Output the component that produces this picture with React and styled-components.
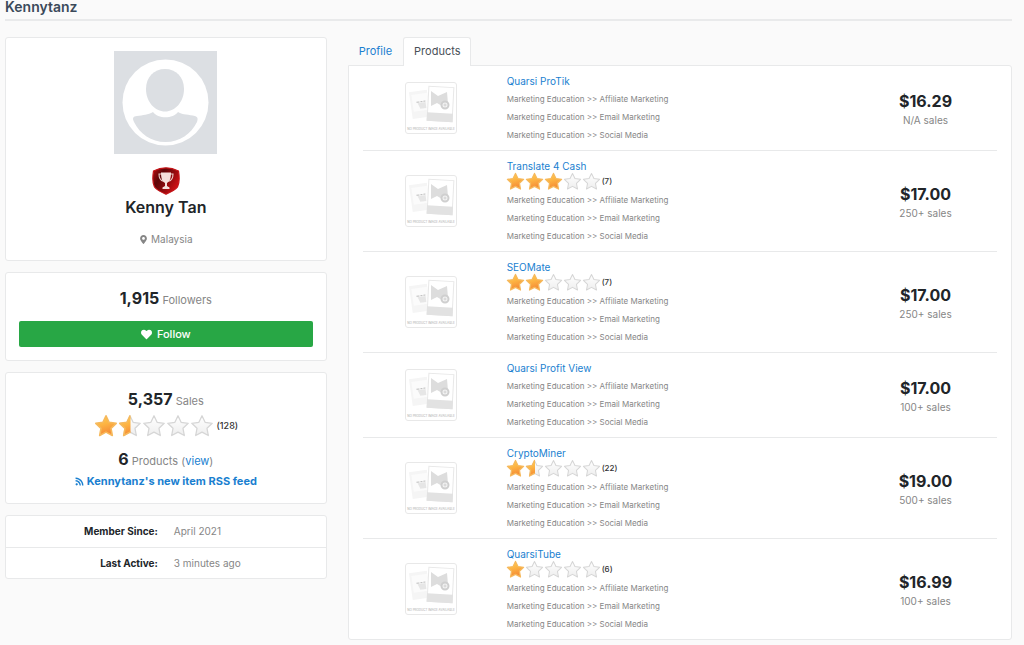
import styled, { createGlobalStyle } from 'styled-components';
import { FaHeart, FaMapMarkerAlt, FaRss } from 'react-icons/fa';

const GlobalStyle = createGlobalStyle`
  * {
    box-sizing: border-box;
  }

  body {
    margin: 0;
    background: #fafafa;
    color: #212529;
    font-family: Inter, 'Liberation Sans', sans-serif;
    font-size: 10px;
    line-height: 16px;
  }
`;

const Page = styled.main`
  padding: 0 12px 6px 5px;
`;

const PageTitle = styled.h1`
  margin: 0 0 16px;
  padding-bottom: 5px;
  border-bottom: 2px solid #e9eaeb;
  color: #3b4a5a;
  font-size: 14px;
  font-weight: 600;
  line-height: 14px;
`;

const Columns = styled.div`
  display: grid;
  grid-template-columns: calc((100% + 21px) / 3 - 21px) 1fr;
  column-gap: 21px;
  align-items: start;
`;

const Sidebar = styled.aside`
  display: flex;
  flex-direction: column;
  gap: 11px;
`;

const Card = styled.section`
  display: flex;
  flex-direction: column;
  align-items: center;
  padding: ${(props) => props.$padding || '0'};
  background: #fff;
  border: 1px solid #e8e9ea;
  border-radius: 3px;
  overflow: hidden;
`;

const UserName = styled.h2`
  margin: 0;
  font-size: 16px;
  font-weight: 600;
  line-height: 24px;
`;

const Location = styled.p`
  display: flex;
  align-items: center;
  gap: 3px;
  margin: 12px 0 0;
  color: #868686;
`;

const Stat = styled.p`
  margin: 0;
  color: #868686;
  font-size: 11px;
  line-height: 24px;

  strong {
    color: #212529;
    font-size: 16px;
    font-weight: 700;
  }
`;

const Link = styled.a`
  color: #1a7fd0;
  font-weight: ${(props) => (props.$bold ? 700 : 400)};
  text-decoration: none;
`;

const FeedLink = styled(Link)`
  display: flex;
  align-items: center;
  gap: 3px;
  font-size: 11px;
`;

const FollowButton = styled.button`
  display: flex;
  align-items: center;
  justify-content: center;
  gap: 5px;
  width: 100%;
  height: 26px;
  margin-top: 9px;
  border: 0;
  border-radius: 2px;
  background: #28a745;
  color: #fff;
  font-family: inherit;
  font-size: 11px;
  font-weight: 500;
`;

const Rating = styled.div`
  display: flex;
  align-items: center;
  height: ${(props) => (props.$large ? 26 : 16)}px;
  margin-bottom: ${(props) => (props.$large ? 8 : 0)}px;
  color: #333;
  font-size: ${(props) => (props.$large ? 9 : 8)}px;
  font-weight: 500;

  svg {
    width: ${(props) => (props.$large ? 24 : 19)}px;
    height: ${(props) => (props.$large ? 24 : 19)}px;
    margin-left: ${(props) => (props.$large ? 0 : -1)}px;
    margin-right: ${(props) => (props.$large ? 0 : 1)}px;
  }

  span {
    margin-left: ${(props) => (props.$large ? 3 : 0)}px;
  }
`;

const DetailsTable = styled.table`
  width: 100%;
  border-collapse: collapse;

  tr + tr {
    border-top: 1px solid #e8e9ea;
  }

  th,
  td {
    height: 31px;
    padding: 0 8px;
  }

  th {
    width: 50%;
    font-weight: 700;
    text-align: right;
  }

  td {
    color: #868686;
  }
`;

const Tabs = styled.nav`
  display: flex;
  margin-bottom: -1px;
`;

const Tab = styled.a`
  position: relative;
  padding: 5px 10px 6px;
  border: 1px solid ${(props) => (props.$active ? '#e8e9ea' : 'transparent')};
  border-bottom: 0;
  border-radius: 3px 3px 0 0;
  background: ${(props) => (props.$active ? '#fff' : 'transparent')};
  color: ${(props) => (props.$active ? '#495057' : '#1a7fd0')};
  font-size: 11px;
  line-height: 17px;
  text-decoration: none;
`;

const Panel = styled.ul`
  margin: 0;
  padding: 0 14px;
  list-style: none;
  background: #fff;
  border: 1px solid #e8e9ea;
  border-radius: 0 3px 3px 3px;
`;

const ProductRow = styled.li`
  display: grid;
  grid-template-columns: 136px 1fr 143px;
  column-gap: 8px;
  align-items: center;
  padding: 8px 0 6px;

  &:not(:last-child) {
    border-bottom: 1px solid #e8e9ea;
  }
`;

const Thumb = styled.div`
  display: flex;
  justify-content: center;
  padding-bottom: 3px;
`;

const ProductName = styled.h3`
  margin: 0;
  font-size: 10px;
  line-height: 14px;
`;

const Categories = styled.div`
  margin-top: 2px;
`;

const Category = styled.p`
  margin: 0;
  color: #868686;
  font-size: 8px;
  line-height: 18px;
`;

const PriceBox = styled.div`
  color: #868686;
  text-align: center;
`;

const Price = styled.div`
  color: #212529;
  font-size: 16px;
  font-weight: 700;
  line-height: 22px;
`;

const STAR =
  'M12 1.8 L15.1 8.3 L22.2 9.3 L17 14.3 L18.3 21.5 L12 18.1 L5.7 21.5 L7 14.3 L1.8 9.3 L8.9 8.3 Z';

function Star({ fill }) {
  return (
    <svg viewBox="0 0 24 24" aria-hidden="true">
      <defs>
        <linearGradient id="starOn" x1="0" y1="0" x2="0.3" y2="1">
          <stop offset="0" stopColor="#ffd04f" />
          <stop offset="0.5" stopColor="#fdb443" />
          <stop offset="1" stopColor="#f58a35" />
        </linearGradient>
        <linearGradient id="starOff" x1="0" y1="0" x2="0" y2="1">
          <stop offset="0" stopColor="#ffffff" />
          <stop offset="1" stopColor="#eeeeee" />
        </linearGradient>
        <clipPath id="starHalf">
          <rect width="12.5" height="24" />
        </clipPath>
      </defs>
      {fill < 1 && (
        <path
          d={STAR}
          fill="url(#starOff)"
          stroke="#d6d6d6"
          strokeWidth="1.3"
          strokeLinejoin="round"
        />
      )}
      {fill > 0 && (
        <path
          d={STAR}
          fill="url(#starOn)"
          stroke="#f6b95c"
          strokeWidth="1.6"
          strokeLinejoin="round"
          clipPath={fill < 1 ? 'url(#starHalf)' : undefined}
        />
      )}
    </svg>
  );
}

function Stars({ value, count, large }) {
  return (
    <Rating $large={large} aria-label={`${value} out of 5`}>
      {[0, 1, 2, 3, 4].map((i) => (
        <Star key={i} fill={Math.max(0, Math.min(1, value - i))} />
      ))}
      <span>({count})</span>
    </Rating>
  );
}

function Avatar() {
  return (
    <svg width="103" height="103" viewBox="0 0 103 103" aria-label="Avatar">
      <rect width="103" height="103" fill="#dcdfe3" />
      <circle cx="51.5" cy="51.5" r="43" fill="#fff" />
      <path
        d="M51 18 C62 18 70 26 70 38 C70 51 61 60.5 51 60.5 C41 60.5 32 51 32 38 C32 26 40 18 51 18 Z"
        fill="#dcdfe3"
      />
      <path
        d="M39 61 C44 68 59 68 64 61 C69 64 75 63.5 81 65 C84 66 84 68 83 71 C77 83 66 91 51.5 91 C37 91 26 83 20 71 C18 67 19 65.5 23 65 C29 64 34 64 39 61 Z"
        fill="#dcdfe3"
      />
    </svg>
  );
}

const Badge = styled.svg`
  margin: 13px 0 0;
`;

function TrophyBadge() {
  return (
    <Badge width="28" height="28" viewBox="0 0 28 28" aria-label="Top seller">
      <defs>
        <linearGradient id="shield" x1="0" y1="0" x2="1" y2="0.6">
          <stop offset="0" stopColor="#b80f12" />
          <stop offset="0.35" stopColor="#5d0608" />
          <stop offset="0.65" stopColor="#8e0a0d" />
          <stop offset="1" stopColor="#d01014" />
        </linearGradient>
      </defs>
      <path
        d="M14 0.8 C18 0.8 23 2.2 26.5 4 C27.5 10 27.5 16 25.5 20 C23 23.5 18 25.5 14 27.2 C10 25.5 5 23.5 2.5 20 C0.5 16 0.5 10 1.5 4 C5 2.2 10 0.8 14 0.8 Z"
        fill="url(#shield)"
        stroke="#c51418"
        strokeWidth="1.2"
      />
      <path
        d="M9.5 7 H7 C7 11 8 13.5 11.5 14.2 M18.5 7 H21 C21 11 20 13.5 16.5 14.2"
        fill="none"
        stroke="#ecd0cb"
        strokeWidth="1.1"
      />
      <path
        d="M9 5.5 H19 C19 11 18 14.5 15 16 V19 L17.5 20.5 V22 H10.5 V20.5 L13 19 V16 C10 14.5 9 11 9 5.5 Z"
        fill="#f4dfdb"
      />
    </Badge>
  );
}

function NoImage() {
  return (
    <svg width="52" height="52" viewBox="0 0 52 52" aria-label="No product image available">
      <rect x="0.5" y="0.5" width="51" height="51" rx="2.5" fill="#fff" stroke="#e8e8e8" />
      <g transform="rotate(-8 14 24)">
        <rect x="6" y="9" width="18" height="27" fill="#f5f5f5" />
        <rect x="8" y="12" width="16" height="17" fill="#fbfbfb" />
        <path d="M13 21 h8 v6 h-6 z" fill="#e6e6e6" />
        <path d="M12 20 h3 M16 20 h2 M19 20 h2" stroke="#bdbdbd" />
      </g>
      <g transform="rotate(3 36 22)">
        <rect x="23" y="5" width="25" height="34" fill="#fff" stroke="#e8e8e8" />
        <rect x="22.5" y="31" width="26" height="8.5" fill="#e2e2e2" />
      </g>
      <path d="M26 9 L33 14 L42 10 L43 22 L37 24 L32 21 L26 24 Z" fill="#dddddd" />
      <circle cx="40" cy="23" r="3.5" fill="#f3f3f3" stroke="#cfcfcf" strokeWidth="2" />
      <path d="M38.5 23 H41.5 M40 21.5 V24.5" stroke="#cccccc" strokeWidth="0.8" />
      <text
        x="26"
        y="48"
        textAnchor="middle"
        fontFamily="Inter, sans-serif"
        fontSize="3"
        fontWeight="500"
        fill="#b8b8b8"
      >
        NO PRODUCT IMAGE AVAILABLE
      </text>
    </svg>
  );
}

const categories = ['Affiliate Marketing', 'Email Marketing', 'Social Media'];

const products = [
  { name: 'Quarsi ProTik', price: '$16.29', sales: 'N/A' },
  { name: 'Translate 4 Cash', price: '$17.00', sales: '250+', rating: 3, count: 7 },
  { name: 'SEOMate', price: '$17.00', sales: '250+', rating: 2, count: 7 },
  { name: 'Quarsi Profit View', price: '$17.00', sales: '100+' },
  { name: 'CryptoMiner', price: '$19.00', sales: '500+', rating: 1.5, count: 22 },
  { name: 'QuarsiTube', price: '$16.99', sales: '100+', rating: 1, count: 6 },
];

function Product({ product }) {
  const { name, price, sales, rating, count } = product;

  return (
    <ProductRow>
      <Thumb>
        <NoImage />
      </Thumb>
      <div>
        <ProductName>
          <Link href="#">{name}</Link>
        </ProductName>
        {rating && <Stars value={rating} count={count} />}
        <Categories>
          {categories.map((category) => (
            <Category key={category}>Marketing Education &gt;&gt; {category}</Category>
          ))}
        </Categories>
      </div>
      <PriceBox>
        <Price>{price}</Price>
        {sales} sales
      </PriceBox>
    </ProductRow>
  );
}

function App() {
  return (
    <>
      <GlobalStyle />
      <Page>
        <PageTitle>Kennytanz</PageTitle>
        <Columns>
          <Sidebar>
            <Card $padding="13px 14px">
              <Avatar />
              <TrophyBadge />
              <UserName>Kenny Tan</UserName>
              <Location>
                <FaMapMarkerAlt size={9} /> Malaysia
              </Location>
            </Card>

            <Card $padding="13px 13px">
              <Stat>
                <strong>1,915</strong> Followers
              </Stat>
              <FollowButton type="button">
                <FaHeart size={11} /> Follow
              </FollowButton>
            </Card>

            <Card $padding="14px 13px">
              <Stat>
                <strong>5,357</strong> Sales
              </Stat>
              <Stars value={1.5} count={128} large />
              <Stat>
                <strong>6</strong> Products (<Link href="#">view</Link>)
              </Stat>
              <FeedLink href="#" $bold>
                <FaRss size={9} /> Kennytanz&apos;s new item RSS feed
              </FeedLink>
            </Card>

            <Card>
              <DetailsTable>
                <tbody>
                  <tr>
                    <th scope="row">Member Since:</th>
                    <td>April 2021</td>
                  </tr>
                  <tr>
                    <th scope="row">Last Active:</th>
                    <td>3 minutes ago</td>
                  </tr>
                </tbody>
              </DetailsTable>
            </Card>
          </Sidebar>

          <section>
            <Tabs>
              <Tab href="#">Profile</Tab>
              <Tab href="#" $active>
                Products
              </Tab>
            </Tabs>
            <Panel>
              {products.map((product) => (
                <Product key={product.name} product={product} />
              ))}
            </Panel>
          </section>
        </Columns>
      </Page>
    </>
  );
}

export default App;
